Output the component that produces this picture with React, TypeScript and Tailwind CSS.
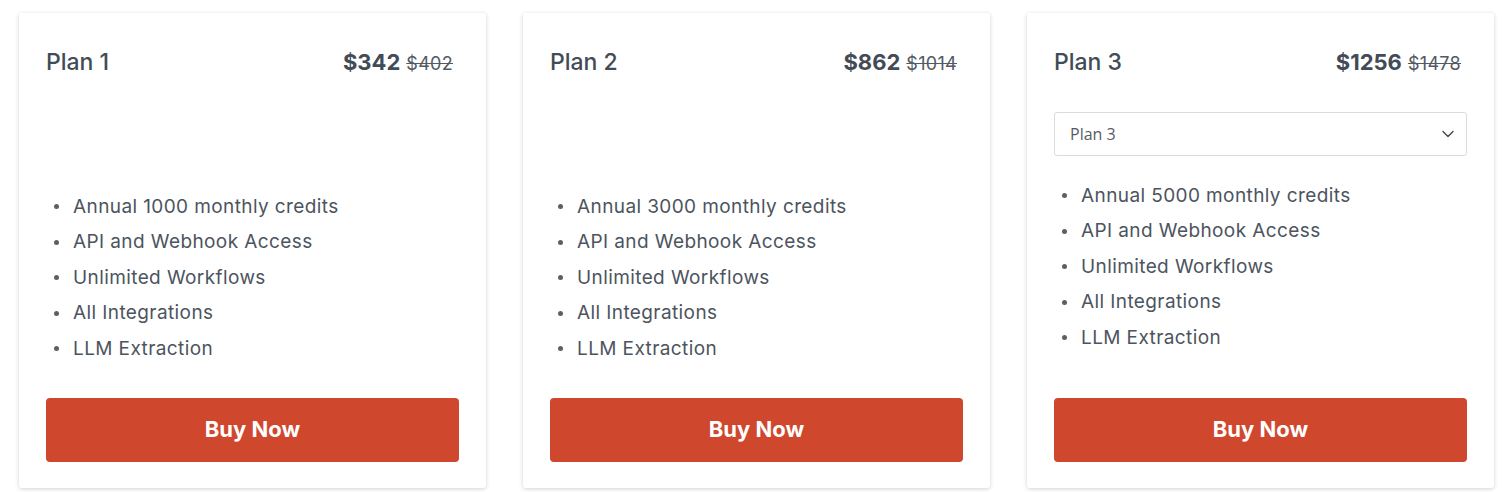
import React from 'react';
import { ChevronDown } from 'lucide-react';

interface Plan {
  name: string;
  price: string;
  oldPrice: string;
  credits: string;
  select?: boolean;
}

const plans: Plan[] = [
  { name: 'Plan 1', price: '$342', oldPrice: '$402', credits: '1000' },
  { name: 'Plan 2', price: '$862', oldPrice: '$1014', credits: '3000' },
  { name: 'Plan 3', price: '$1256', oldPrice: '$1478', credits: '5000', select: true },
];

const PlanCard: React.FC<{ plan: Plan }> = ({ plan }) => {
  const features = [
    `Annual ${plan.credits} monthly credits`,
    'API and Webhook Access',
    'Unlimited Workflows',
    'All Integrations',
    'LLM Extraction',
  ];

  return (
    <div className="w-[467px] bg-white rounded-[3px] shadow-[0_1px_4px_rgba(0,0,0,0.18)] pt-[35px] px-[27px] pb-[26px] flex flex-col">
      <div className="h-[28px] flex items-center justify-between pr-[6px] text-[#434b56]">
        <h2 className="text-[23px] font-medium tracking-[0px]">{plan.name}</h2>
        <div className="flex items-baseline gap-[6px]">
          <span className="text-[22px] font-bold tracking-[0px]">{plan.price}</span>
          <span className="text-[18px] line-through text-[#525a64] tracking-[0.3px]">{plan.oldPrice}</span>
        </div>
      </div>

      {plan.select ? (
        <div className="mt-[36px] h-[44px] border border-[#dcdcdc] rounded-[3px] flex items-center justify-between pl-[15px] pr-[8px] font-['Open_Sans',sans-serif] text-[16px] text-[#555b63]">
          <span>Plan 3</span>
          <ChevronDown className="w-[20px] h-[20px] text-[#444]" strokeWidth={1.6} />
        </div>
      ) : (
        <div className="mt-[36px] h-[44px]" />
      )}

      <ul className={plan.select ? 'mt-[22px]' : 'mt-[33px]'}>
        {features.map((f, i) => (
          <li key={i} className="h-[35.5px] flex items-center text-[19px] text-[#4c545e] tracking-[0.4px]">
            <span className="w-[5px] h-[5px] rounded-full bg-[#5a6068] ml-[8px] mr-[14px]" />
            {f}
          </li>
        ))}
      </ul>

      <button
        className={`${plan.select ? 'mt-[42px]' : 'mt-[31px]'} h-[64px] w-full rounded-[4px] bg-[#cf472d] text-white text-[22px] font-bold tracking-[0px]`}
      >
        Buy Now
      </button>
    </div>
  );
};

export default function App() {
  return (
    <div className="w-[1507px] h-[492px] overflow-hidden bg-white pt-[13px] pl-[19px] font-['Inter',sans-serif]">
      <div className="flex gap-[37px] items-start">
        {plans.map((p) => (
          <PlanCard key={p.name} plan={p} />
        ))}
      </div>
    </div>
  );
}
